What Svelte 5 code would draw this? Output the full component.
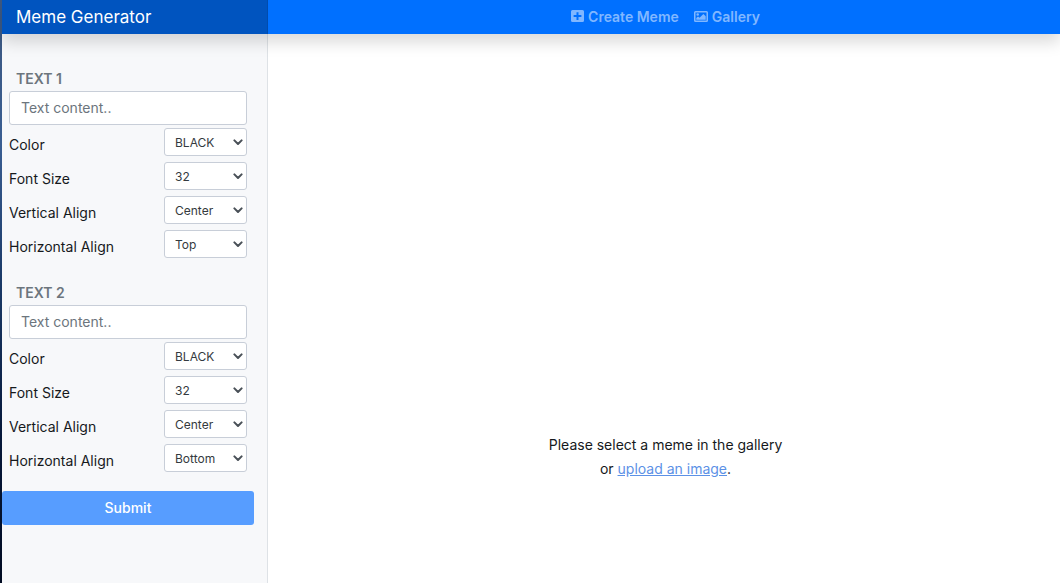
<script>
  const colors = ['BLACK', 'WHITE', 'RED', 'BLUE'];
  const sizes = ['16', '24', '32', '48', '64'];
  const verticals = ['Left', 'Center', 'Right'];
  const horizontals = ['Top', 'Center', 'Bottom'];

  let groups = $state([
    { title: 'TEXT 1', content: '', values: ['BLACK', '32', 'Center', 'Top'] },
    { title: 'TEXT 2', content: '', values: ['BLACK', '32', 'Center', 'Bottom'] }
  ]);

  const fields = [
    { label: 'Color', options: colors },
    { label: 'Font Size', options: sizes },
    { label: 'Vertical Align', options: verticals },
    { label: 'Horizontal Align', options: horizontals }
  ];
</script>

<div class="page">
  <header>
    <a class="brand" href="#home">Meme Generator</a>
    <nav>
      <a href="#create">
        <svg width="13" height="12" viewBox="0 0 13 12" aria-hidden="true">
          <path fill="currentColor" fill-rule="evenodd" d="M1.5 0h10A1.5 1.5 0 0 1 13 1.5v9a1.5 1.5 0 0 1-1.5 1.5h-10A1.5 1.5 0 0 1 0 10.5v-9A1.5 1.5 0 0 1 1.5 0zM5.5 2.2v2.9H2.6v2h2.9V10h2V7.100h2.900v-2H7.500V2.200z" />
        </svg>
        <span>Create Meme</span>
      </a>
      <a href="#gallery">
        <svg width="14" height="11" viewBox="0 0 14 11" aria-hidden="true">
          <path fill="currentColor" fill-rule="evenodd" d="M1.5 0h11A1.5 1.5 0 0 1 14 1.500v8a1.500 1.500 0 0 1-1.500 1.500h-11A1.500 1.500 0 0 1 0 9.500v-8A1.500 1.500 0 0 1 1.500 0zM1.500 1.500v8h11v-8zM3.700 2.200a1.300 1.300 0 1 1 0 2.600a1.300 1.300 0 0 1 0-2.600zM2.300 8.700V7.100l1.700-1.700 1.600 1.400 3.800-3.800 2.300 2.200v3.500z" />
        </svg>
        <span>Gallery</span>
      </a>
    </nav>
  </header>

  <div class="body">
    <form class="sidebar" onsubmit={(e) => e.preventDefault()}>
      {#each groups as group, g}
        <fieldset>
          <legend>{group.title}</legend>
          <input type="text" placeholder="Text content.." aria-label={group.title} bind:value={group.content} />
          {#each fields as field, f}
            <div class="row">
              <label for="field-{g}-{f}">{field.label}</label>
              <div class="select">
                <select id="field-{g}-{f}" bind:value={group.values[f]}>
                  {#each field.options as option}
                    <option value={option}>{option}</option>
                  {/each}
                </select>
                <svg width="10" height="7" viewBox="0 0 10 7" aria-hidden="true">
                  <path d="M1.4 1.4 5 5l3.6-3.6" fill="none" stroke="#495057" stroke-width="2" stroke-linecap="round" stroke-linejoin="round" />
                </svg>
              </div>
            </div>
          {/each}
        </fieldset>
      {/each}
      <button type="submit">Submit</button>
    </form>

    <main>
      <p>Please select a meme in the gallery<br />or <a href="#upload">upload an image</a>.</p>
    </main>
  </div>
</div>

<style>
  .page {
    min-height: 100vh;
    box-sizing: border-box;
    padding-left: 2px;
    display: flex;
    flex-direction: column;
    font-family: Inter, "Liberation Sans", sans-serif;
    font-size: 14px;
    line-height: 24px;
    color: #16191c;
    background: linear-gradient(#3d5880, #3a5e92 25%, #1b3a68 48%, #06183a 75%, #020c22);
  }

  header {
    position: relative;
    display: flex;
    height: 34px;
    background: #0070ff;
    box-shadow: 0 8px 16px rgba(0, 0, 0, 0.15);
  }

  .brand {
    box-sizing: border-box;
    width: 266px;
    padding: 0 14px;
    font-size: 17px;
    line-height: 34px;
    color: #fff;
    text-decoration: none;
    background: #0054bf;
    border-right: 1px solid #004cae;
  }

  nav {
    flex: 1;
    display: flex;
    justify-content: center;
    align-items: center;
    gap: 15px;
    padding-left: 3px;
  }

  nav a {
    display: flex;
    align-items: center;
    gap: 4px;
    font-weight: 600;
    color: #80b7ff;
    text-decoration: none;
  }

  nav svg {
    margin-bottom: 2px;
  }

  .body {
    flex: 1;
    display: flex;
  }

  .sidebar {
    box-sizing: border-box;
    width: 266px;
    padding: 33px 13px 0 0;
    background: #f7f8fa;
    border-right: 1px solid #dee2e6;
  }

  fieldset {
    min-width: 0;
    margin: 0 0 23px;
    padding: 0 7px;
    border: 0;
  }

  fieldset + fieldset {
    margin-bottom: 19px;
  }

  legend {
    padding: 0 7px;
    font-weight: 600;
    color: #6c757d;
  }

  input {
    display: block;
    box-sizing: border-box;
    width: 100%;
    height: 34px;
    margin-bottom: 3px;
    padding: 0 11px 1px;
    font: inherit;
    color: #495057;
    background: #fff;
    border: 1px solid #c8ced8;
    border-radius: 3px;
  }

  input::placeholder {
    color: #6c757d;
    opacity: 1;
  }

  .row {
    display: flex;
    justify-content: space-between;
    align-items: flex-start;
  }

  .row + .row {
    margin-top: 6px;
  }

  label {
    padding-top: 5px;
    line-height: 23px;
  }

  .select {
    display: grid;
    width: 83px;
    align-items: center;
  }

  select,
  .select svg {
    grid-area: 1 / 1;
  }

  select {
    appearance: none;
    width: 100%;
    height: 28px;
    padding: 0 10px;
    font-family: inherit;
    font-size: 12px;
    color: #343a40;
    background: #fff;
    border: 1px solid #c8ced8;
    border-radius: 3px;
  }

  .select svg {
    justify-self: end;
    margin-right: 4px;
    pointer-events: none;
  }

  button {
    display: block;
    width: 100%;
    height: 34px;
    padding: 0;
    font: inherit;
    font-weight: 500;
    color: #fff;
    background: #579dff;
    border: 0;
    border-radius: 3px;
  }

  main {
    flex: 1;
    padding: 399px 0 0 3px;
    text-align: center;
    background: #fff;
  }

  p {
    margin: 0;
  }

  p a {
    color: #5c91e6;
  }
</style>
